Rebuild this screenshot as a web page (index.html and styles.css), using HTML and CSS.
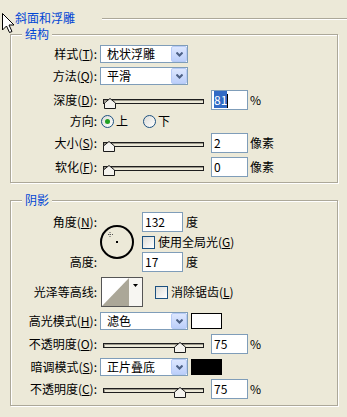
FILE: index.html
```html
<!DOCTYPE html>
<html lang="zh-CN">
<head>
    <meta charset="UTF-8">
    <title>斜面和浮雕</title>
    <link rel="stylesheet" href="styles.css">
</head>
<body>
<div class="head">
    <span class="head-title">斜面和浮雕</span>
    <span class="head-line"></span>
</div>

<div class="group">
    <div class="legend">结构</div>
    <div class="rows">
        <div class="row h22">
            <span class="lbl">样式(<u>T</u>):</span>
            <div class="select"><span>枕状浮雕</span><span class="select-btn"><svg width="7" height="5"><polyline points="0.5,0.5 3.5,3.5 6.5,0.5" fill="none" stroke="#4d6185" stroke-width="2"/></svg></span></div>
        </div>
        <div class="row h22">
            <span class="lbl">方法(<u>Q</u>):</span>
            <div class="select"><span>平滑</span><span class="select-btn"><svg width="7" height="5"><polyline points="0.5,0.5 3.5,3.5 6.5,0.5" fill="none" stroke="#4d6185" stroke-width="2"/></svg></span></div>
        </div>
        <div class="row h26">
            <span class="lbl">深度(<u>D</u>):</span>
            <div class="slider"><div class="track"></div><svg class="thumb" width="12" height="11" style="left:1px"><polygon points="6,0.5 11.5,5 11.5,10.5 0.5,10.5 0.5,5" fill="#f4f3ee" stroke="#1a1a1a"/></svg></div>
            <div class="field"><span class="sel">81</span><span class="caret"></span></div>
            <span class="unit">%</span>
        </div>
        <div class="row h16">
            <span class="lbl">方向:</span>
            <span class="opt"><span class="radio radio-on"></span>上</span>
            <span class="opt opt-next"><span class="radio"></span>下</span>
        </div>
        <div class="row h28">
            <span class="lbl">大小(<u>S</u>):</span>
            <div class="slider"><div class="track"></div><svg class="thumb" width="12" height="11" style="left:0px"><polygon points="6,0.5 11.5,5 11.5,10.5 0.5,10.5 0.5,5" fill="#f4f3ee" stroke="#1a1a1a"/></svg></div>
            <div class="field">2</div>
            <span class="unit">像素</span>
        </div>
        <div class="row h20">
            <span class="lbl">软化(<u>F</u>):</span>
            <div class="slider"><div class="track"></div><svg class="thumb" width="12" height="11" style="left:0px"><polygon points="6,0.5 11.5,5 11.5,10.5 0.5,10.5 0.5,5" fill="#f4f3ee" stroke="#1a1a1a"/></svg></div>
            <div class="field">0</div>
            <span class="unit">像素</span>
        </div>
    </div>
</div>

<div class="group">
    <div class="legend">阴影</div>
    <div class="angle">
        <div class="angle-labels">
            <div class="cell h24">角度(<u>N</u>):</div>
            <div class="cell h16"></div>
            <div class="cell h24">高度:</div>
        </div>
        <svg class="dial" width="34" height="34">
            <circle cx="17" cy="17" r="16" fill="none" stroke="#000" stroke-width="2"/>
            <rect x="16" y="16" width="2" height="2" fill="#000"/>
            <path d="M10 7v5M8 9.5h5" stroke="#555" stroke-width="1" stroke-dasharray="1 1"/>
        </svg>
        <div class="angle-fields">
            <div class="row h24"><div class="field field-wide">132</div><span class="unit unit-deg">度</span></div>
            <div class="row h16"><span class="check"></span>使用全局光(<u>G</u>)</div>
            <div class="row h24"><div class="field field-wide">17</div><span class="unit unit-deg">度</span></div>
        </div>
    </div>
    <div class="row h36">
        <span class="lbl">光泽等高线:</span>
        <div class="contour">
            <svg width="27" height="28"><polygon points="0,28 27,0 27,28" fill="#aba798"/></svg>
            <span class="contour-btn"><svg width="5" height="3"><polygon points="0,0 5,0 2.5,3" fill="#000"/></svg></span>
        </div>
        <span class="check check-gap"></span>消除锯齿(<u>L</u>)
    </div>
    <div class="row h22">
        <span class="lbl">高光模式(<u>H</u>):</span>
        <div class="select"><span>滤色</span><span class="select-btn"><svg width="7" height="5"><polyline points="0.5,0.5 3.5,3.5 6.5,0.5" fill="none" stroke="#4d6185" stroke-width="2"/></svg></span></div>
        <span class="swatch"></span>
    </div>
    <div class="row h24">
        <span class="lbl">不透明度(<u>O</u>):</span>
        <div class="slider"><div class="track"></div><svg class="thumb" width="12" height="11" style="left:71px"><polygon points="6,0.5 11.5,5 11.5,10.5 0.5,10.5 0.5,5" fill="#f4f3ee" stroke="#1a1a1a"/></svg></div>
        <div class="field">75</div>
        <span class="unit">%</span>
    </div>
    <div class="row h22">
        <span class="lbl">暗调模式(<u>S</u>):</span>
        <div class="select"><span>正片叠底</span><span class="select-btn"><svg width="7" height="5"><polyline points="0.5,0.5 3.5,3.5 6.5,0.5" fill="none" stroke="#4d6185" stroke-width="2"/></svg></span></div>
        <span class="swatch swatch-black"></span>
    </div>
    <div class="row h22">
        <span class="lbl">不透明度(<u>C</u>):</span>
        <div class="slider"><div class="track"></div><svg class="thumb" width="12" height="11" style="left:71px"><polygon points="6,0.5 11.5,5 11.5,10.5 0.5,10.5 0.5,5" fill="#f4f3ee" stroke="#1a1a1a"/></svg></div>
        <div class="field">75</div>
        <span class="unit">%</span>
    </div>
</div>

<svg class="cursor" width="13" height="21"><polygon points="0.5,0.5 0.5,17 4.5,13 7.5,19.5 10,18.5 7,12 12,12" fill="#fff" stroke="#000"/></svg>
</body>
</html>
```

FILE: styles.css
```css
body {
    margin: 0;
    padding-top: 11px;
    width: 347px;
    height: 417px;
    box-sizing: border-box;
    overflow: hidden;
    position: relative;
    background-color: #ece9d8;
    font-family: "Noto Sans CJK SC", sans-serif;
    font-size: 12px;
    line-height: 14px;
    color: #000;
}

.cursor {
    position: absolute;
    left: 2px;
    top: 13px;
}

.head {
    display: flex;
    height: 14px;
    padding-left: 15px;
}

.head-title {
    color: #0046d5;
}

.head-line {
    flex: 1;
    height: 0;
    margin: 7px 0 0 27px;
    border-top: 1px solid #aca899;
    border-bottom: 1px solid #fff;
}

.group {
    margin: 9px 9px 0 10px;
    padding-bottom: 5px;
    border: 1px solid #aca899;
    box-shadow: inset 1px 1px 0 #fff, 1px 1px 0 #fff;
}

.group + .group {
    margin-top: 17px;
}

.legend {
    width: fit-content;
    margin: -8px 0 0 11px;
    padding: 0 3px;
    background-color: #ece9d8;
    color: #0046d5;
}

.rows {
    padding-top: 2px;
}

.row {
    display: flex;
    align-items: center;
    white-space: nowrap;
}

.h16 { height: 16px; }
.h20 { height: 20px; }
.h22 { height: 22px; }
.h24 { height: 24px; }
.h26 { height: 26px; }
.h28 { height: 28px; }
.h36 { height: 36px; }

.lbl {
    flex: none;
    width: 86px;
    margin-right: 3px;
    text-align: right;
}

.select {
    flex: none;
    display: flex;
    align-items: center;
    justify-content: space-between;
    box-sizing: border-box;
    width: 88px;
    height: 18px;
    padding-left: 6px;
    border: 1px solid #7f9db9;
    background-color: #fff;
}

.select-btn {
    display: flex;
    align-items: center;
    justify-content: center;
    box-sizing: border-box;
    width: 16px;
    height: 16px;
    border: 1px solid #b7cbf6;
    border-radius: 2px;
    background: linear-gradient(#dde7fe, #bccffa);
}

.slider {
    flex: none;
    position: relative;
    width: 101px;
    height: 20px;
    margin-left: 3px;
}

.track {
    margin-top: 9px;
    height: 5px;
    box-sizing: border-box;
    border: 1px solid #1e1e1e;
    background-color: #ece9d8;
    box-shadow: inset 1px 1px 0 #9a978a;
}

.thumb {
    position: absolute;
    top: 8px;
}

.field {
    flex: none;
    box-sizing: border-box;
    width: 37px;
    height: 20px;
    padding-left: 2px;
    border: 1px solid #7f9db9;
    background-color: #fff;
    line-height: 18px;
}

.slider + .field {
    margin-left: 7px;
}

.field-wide {
    width: 41px;
}

.sel {
    background-color: #316ac5;
    color: #fff;
}

.caret {
    display: inline-block;
    width: 1px;
    height: 14px;
    vertical-align: -3px;
    background-color: #000;
}

.unit {
    margin-left: 2px;
}

.unit-deg {
    margin-left: 3px;
}

.opt {
    display: flex;
    align-items: center;
    gap: 2px;
    margin-left: 1px;
}

.opt-next {
    margin-left: 15px;
}

.radio {
    display: flex;
    align-items: center;
    justify-content: center;
    box-sizing: border-box;
    width: 13px;
    height: 13px;
    border: 1px solid #1c5180;
    border-radius: 50%;
    background: linear-gradient(135deg, #dcdcd7, #fff);
}

.radio-on::after {
    content: "";
    width: 5px;
    height: 5px;
    border-radius: 50%;
    background-color: #21a121;
}

.check {
    flex: none;
    box-sizing: border-box;
    width: 13px;
    height: 13px;
    margin-right: 3px;
    border: 1px solid #1c5180;
    background: linear-gradient(135deg, #dcdcd7, #fff);
}

.check-gap {
    margin-left: 12px;
}

.angle {
    display: flex;
    height: 64px;
    margin-top: 3px;
}

.angle-labels {
    flex: none;
    width: 86px;
    margin-right: 3px;
    text-align: right;
}

.cell.h24 {
    line-height: 24px;
}

.dial {
    align-self: center;
    margin-right: 8px;
}

.angle-fields .row {
    white-space: nowrap;
}

.contour {
    flex: none;
    display: flex;
    box-sizing: border-box;
    width: 42px;
    height: 30px;
    margin-left: 1px;
    border: 1px solid #555;
    background-color: #fff;
}

.contour-btn {
    flex: 1;
    display: flex;
    justify-content: center;
    padding-top: 6px;
    background-color: #f7f6f2;
}

.swatch {
    flex: none;
    box-sizing: border-box;
    width: 31px;
    height: 16px;
    margin-left: 3px;
    border: 1px solid #000;
    background-color: #fff;
}

.swatch-black {
    background-color: #000;
}
```
